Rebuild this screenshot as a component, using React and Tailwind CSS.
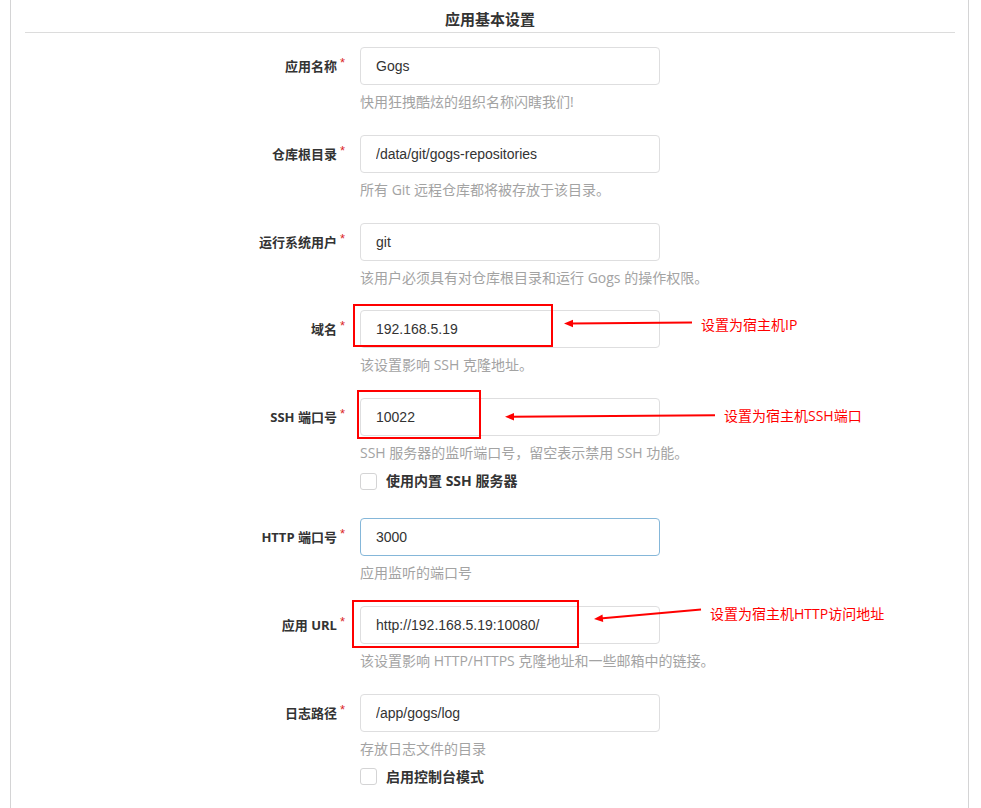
import React from "react";

const CJK = { fontFamily: '"Noto Sans CJK SC", "Liberation Sans", sans-serif' };
const MIX = { fontFamily: '"Open Sans", "Noto Sans CJK SC", sans-serif' };
const LAT = { fontFamily: '"Liberation Sans", "Noto Sans CJK SC", sans-serif' };

function Row({ label, value, help, checkbox, focused, mb = "mb-[22.8px]" }) {
  return (
    <div className={`flex items-start ${mb}`}>
      <div className="w-[334px] shrink-0 h-[38px] flex items-center justify-end">
        <span className="text-[13px] font-bold text-[#333] leading-[20px] whitespace-pre" style={MIX}>
          {label}
        </span>
        <span className="text-[#db2828] text-[13px] leading-none self-start mt-[9px] ml-[3px]" style={LAT}>*</span>
      </div>
      <div className="ml-[15px] w-[300px] shrink-0">
        <input
          readOnly
          value={value}
          className={`block w-[300px] h-[38px] rounded-[4px] border ${focused ? "border-[#85b7d9]" : "border-[#dededf]"} bg-white px-[15px] text-[14px] text-[#333] outline-none`}
          style={LAT}
        />
        <div className="mt-[7px] h-[20px] leading-[20px] text-[14px] text-[#a3a3a3] whitespace-pre" style={MIX}>
          {help}
        </div>
        {checkbox && (
          <div className="mt-[8px] h-[20px] flex items-center">
            <span className="w-[17px] h-[17px] rounded-[3px] border border-[#d4d4d5] bg-white shrink-0" />
            <span className="ml-[9px] text-[14px] font-bold text-[#333] leading-[20px] whitespace-pre" style={MIX}>
              {checkbox}
            </span>
          </div>
        )}
      </div>
    </div>
  );
}

export default function App() {
  return (
    <div className="relative w-[981px] h-[808px] overflow-hidden bg-white">
      <div className="ml-[10px] w-[959px] h-[808px] border-x border-[#d4d4d5] bg-white">
        <div
          className="ml-[14px] mr-[13px] h-[33px] border-b border-[#dcdcdc] text-center pt-[9px] text-[15px] font-bold text-[#333] leading-[20px]"
          style={CJK}
        >
          应用基本设置
        </div>
        <div className="pt-[14px]">
          <Row label="应用名称" value="Gogs" help="快用狂拽酷炫的组织名称闪瞎我们!" />
          <Row label="仓库根目录" value="/data/git/gogs-repositories" help="所有 Git 远程仓库都将被存放于该目录。" />
          <Row label="运行系统用户" value="git" help="该用户必须具有对仓库根目录和运行 Gogs 的操作权限。" />
          <Row label="域名" value="192.168.5.19" help="该设置影响 SSH 克隆地址。" />
          <Row
            label="SSH 端口号"
            value="10022"
            help="SSH 服务器的监听端口号，留空表示禁用 SSH 功能。"
            checkbox="使用内置 SSH 服务器"
            mb="mb-[27px]"
          />
          <Row label="HTTP 端口号" value="3000" help="应用监听的端口号" focused />
          <Row label="应用 URL" value="http://192.168.5.19:10080/" help="该设置影响 HTTP/HTTPS 克隆地址和一些邮箱中的链接。" />
          <Row label="日志路径" value="/app/gogs/log" help="存放日志文件的目录" checkbox="启用控制台模式" />
        </div>
      </div>

      {/* red annotations overlay */}
      <svg className="absolute left-0 top-0 pointer-events-none" width="981" height="808">
        <g fill="none" stroke="#ff0000" strokeWidth="2">
          <rect x="354" y="305" width="198" height="41" />
          <rect x="358" y="391" width="122" height="47" />
          <rect x="353" y="601" width="225" height="46" />
          <line x1="692" y1="322.5" x2="570" y2="323.5" />
          <line x1="715" y1="415.3" x2="511" y2="416.7" />
          <line x1="701" y1="609.5" x2="600" y2="618.5" />
        </g>
        <g fill="#ff0000">
          <polygon points="564,323.6 573,319.8 573,327.2" />
          <polygon points="505,416.8 514,413 514,420.4" />
          <polygon points="594,619 602.5,614.5 603.2,621.9" />
        </g>
      </svg>
      <div className="absolute left-[701px] top-[315px] text-[14px] leading-[20px] text-[#ff0000] whitespace-nowrap" style={MIX}>
        设置为宿主机IP
      </div>
      <div className="absolute left-[724px] top-[406px] text-[14px] leading-[20px] text-[#ff0000] whitespace-nowrap" style={MIX}>
        设置为宿主机SSH端口
      </div>
      <div className="absolute left-[710px] top-[604px] text-[14px] leading-[20px] text-[#ff0000] whitespace-nowrap" style={MIX}>
        设置为宿主机HTTP访问地址
      </div>
    </div>
  );
}
